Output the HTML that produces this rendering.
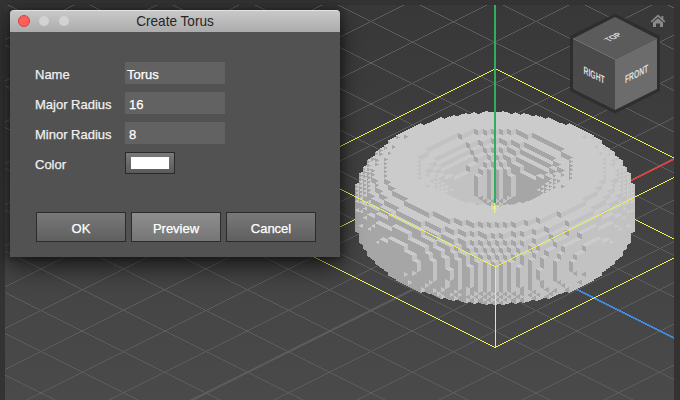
<!DOCTYPE html>
<html><head><meta charset="utf-8"><style>
html,body{margin:0;padding:0;width:680px;height:400px;overflow:hidden;background:#333;}
body{position:relative;font-family:"Liberation Sans",sans-serif;}
svg{position:absolute;left:0;top:0;}
.dlg{position:absolute;left:10px;top:10px;width:330px;height:247px;background:#525252;border-radius:4px 4px 0 0;box-shadow:0 0 6px 3px rgba(0,0,0,0.28),0 10px 24px rgba(0,0,0,0.6);}
.tb{position:absolute;left:0;top:0;width:330px;height:22px;background:linear-gradient(#c8c8c8,#acacac);border-top:1px solid #e2e2e2;box-sizing:border-box;border-radius:4px 4px 0 0;}
.tt{position:absolute;left:0;width:330px;top:2px;text-align:center;font-size:14.1px;color:#262626;line-height:16px;transform:scaleX(0.965);}
.dot{position:absolute;top:4px;width:12px;height:12px;border-radius:50%;box-sizing:border-box;}
.lbl{position:absolute;left:25px;font-size:13px;color:#f0f0f0;line-height:16px;-webkit-text-stroke:0.25px #f0f0f0;}
.fld{position:absolute;left:115px;width:100px;height:22px;background:#626262;}
.fld span{position:absolute;left:2px;top:4.5px;-webkit-text-stroke:0.25px #fff;font-size:13px;color:#fff;line-height:16px;}
.btn{position:absolute;top:202px;width:90px;height:30px;box-sizing:border-box;border:1px solid #2c2c2c;background:linear-gradient(#797979,#5f5f5f);color:#fff;font-size:13px;text-align:center;line-height:31px;-webkit-text-stroke:0.25px #fff;}
</style></head><body>
<svg width="680" height="400" viewBox="0 0 680 400">
<defs>
<linearGradient id="bg" x1="0" y1="0" x2="0" y2="1">
<stop offset="0" stop-color="#383838"/><stop offset="1" stop-color="#4a4a4a"/>
</linearGradient>
<clipPath id="vp"><rect x="5" y="5" width="669" height="395"/></clipPath>
</defs>
<rect x="0" y="0" width="680" height="400" fill="#333"/>
<rect x="5" y="5" width="669" height="395" fill="url(#bg)"/>
<g clip-path="url(#vp)">
<path d="M0.00 -535.10L680.00 -195.10M0.00 -493.85L680.00 -153.85M0.00 -452.60L680.00 -112.60M0.00 -411.35L680.00 -71.35M0.00 -370.10L680.00 -30.10M0.00 -328.85L680.00 11.15M0.00 -287.60L680.00 52.40M0.00 -246.35L680.00 93.65M0.00 -205.10L680.00 134.90M0.00 -163.85L680.00 176.15M0.00 -122.60L680.00 217.40M0.00 -81.35L680.00 258.65M0.00 -40.10L680.00 299.90M0.00 1.15L680.00 341.15M0.00 42.40L680.00 382.40M0.00 83.65L680.00 423.65M0.00 124.90L680.00 464.90M0.00 166.15L680.00 506.15M0.00 207.40L680.00 547.40M0.00 248.65L680.00 588.65M0.00 289.90L680.00 629.90M0.00 331.15L680.00 671.15M0.00 372.40L680.00 712.40M0.00 413.65L680.00 753.65M0.00 454.90L680.00 794.90M0.00 496.15L680.00 836.15M0.00 537.40L680.00 877.40M0.00 578.65L680.00 918.65M0.00 619.90L680.00 959.90M0.00 661.15L680.00 1001.15M0.00 702.40L680.00 1042.40M0.00 743.65L680.00 1083.65M0.00 784.90L680.00 1124.90M0.00 826.15L680.00 1166.15M0.00 867.40L680.00 1207.40M0.00 908.65L680.00 1248.65M0.00 949.90L680.00 1289.90M0.00 991.15L680.00 1331.15M0.00 1032.40L680.00 1372.40M0.00 1073.65L680.00 1413.65M0.00 -494.10L680.00 -834.10M0.00 -452.85L680.00 -792.85M0.00 -411.60L680.00 -751.60M0.00 -370.35L680.00 -710.35M0.00 -329.10L680.00 -669.10M0.00 -287.85L680.00 -627.85M0.00 -246.60L680.00 -586.60M0.00 -205.35L680.00 -545.35M0.00 -164.10L680.00 -504.10M0.00 -122.85L680.00 -462.85M0.00 -81.60L680.00 -421.60M0.00 -40.35L680.00 -380.35M0.00 0.90L680.00 -339.10M0.00 42.15L680.00 -297.85M0.00 83.40L680.00 -256.60M0.00 124.65L680.00 -215.35M0.00 165.90L680.00 -174.10M0.00 207.15L680.00 -132.85M0.00 248.40L680.00 -91.60M0.00 289.65L680.00 -50.35M0.00 330.90L680.00 -9.10M0.00 372.15L680.00 32.15M0.00 413.40L680.00 73.40M0.00 454.65L680.00 114.65M0.00 495.90L680.00 155.90M0.00 537.15L680.00 197.15M0.00 578.40L680.00 238.40M0.00 619.65L680.00 279.65M0.00 660.90L680.00 320.90M0.00 702.15L680.00 362.15M0.00 743.40L680.00 403.40M0.00 784.65L680.00 444.65M0.00 825.90L680.00 485.90M0.00 867.15L680.00 527.15M0.00 908.40L680.00 568.40M0.00 949.65L680.00 609.65M0.00 990.90L680.00 650.90M0.00 1032.15L680.00 692.15M0.00 1073.40L680.00 733.40M0.00 1114.65L680.00 774.65" stroke="#5c5c5c" stroke-width="1" fill="none" shape-rendering="crispEdges"/>
<path d="M0 496L680 156" stroke="#5e5e5e" stroke-width="2" fill="none"/>
<path d="M494.9 248.5L680 155.95" stroke="#dc4444" stroke-width="1.7" fill="none" shape-rendering="crispEdges"/>
<path d="M494.9 248.5L680 341.05" stroke="#4288e0" stroke-width="1.7" fill="none" shape-rendering="crispEdges"/>
<g stroke="#f0f052" stroke-width="1" fill="none" shape-rendering="crispEdges">
<path d="M297.30 167.80L495.30 68.80L693.30 167.80"/>
<path d="M297.30 248.50L495.30 347.50L693.30 248.50"/>
<path d="M297.30 248.50L495.30 149.50L693.30 248.50"/>
</g>
<g shape-rendering="crispEdges">
<path d="M502 111h2v1h-2zM485 111h3v1h-3zM494 111h2v1h-2zM515 112h1v1h-1zM473 112h2v1h-2zM482 112h26v1h-26zM523 113h2v1h-2zM465 113h2v1h-2zM480 113h30v1h-30zM471 113h6v1h-6zM513 113h5v1h-5zM461 114h59v1h-59zM521 114h8v1h-8zM459 115h72v1h-72zM453 115h2v1h-2zM535 115h2v1h-2zM449 116h1v1h-1zM540 116h1v1h-1zM451 116h88v1h-88zM447 117h96v1h-96zM440 117h2v1h-2zM548 117h1v1h-1zM438 118h6v1h-6zM445 118h100v1h-100zM546 118h5v1h-5zM436 119h117v1h-117zM434 120h121v1h-121zM432 121h125v1h-125zM430 122h129v1h-129zM427 123h136v1h-136zM420 123h1v1h-1zM569 123h1v1h-1zM418 124h5v1h-5zM567 124h5v1h-5zM425 124h140v1h-140zM416 125h158v1h-158zM414 126h162v1h-162zM412 127h166v1h-166zM410 128h170v1h-170zM408 129h174v1h-174zM406 130h178v1h-178zM404 131h182v1h-182zM402 132h186v1h-186zM400 133h190v1h-190zM398 134h194v1h-194zM396 135h198v2h-198zM394 137h202v1h-202zM392 138h206v1h-206zM390 139h210v1h-210zM388 140h214v4h-214zM386 144h217v1h-217zM384 145h221v1h-221zM384 146h222v1h-222zM382 147h226v1h-226zM380 148h230v1h-230zM379 149h231v1h-231zM378 150h234v1h-234zM376 151h238v1h-238zM375 152h240v4h-240zM373 156h244v1h-244zM371 157h248v1h-248zM370 158h249v1h-249zM368 159h253v1h-253zM367 160h256v5h-256zM366 165h257v1h-257zM364 166h261v1h-261zM363 167h264v5h-264zM361 172h268v1h-268zM359 173h272v10h-272zM357 183h276v1h-276zM355 184h280v48h-280zM357 232h276v1h-276zM359 233h272v10h-272zM360 243h270v1h-270zM362 244h266v1h-266zM363 245h264v4h-264zM364 249h262v1h-262zM366 250h258v1h-258zM367 251h256v5h-256zM368 256h254v1h-254zM370 257h250v1h-250zM371 258h248v1h-248zM372 259h246v1h-246zM374 260h242v1h-242zM375 261h240v3h-240zM376 264h238v1h-238zM378 265h234v1h-234zM379 266h231v1h-231zM380 267h230v1h-230zM382 268h226v1h-226zM384 269h222v2h-222zM386 271h218v1h-218zM388 272h214v4h-214zM390 276h210v1h-210zM392 277h206v1h-206zM394 278h202v1h-202zM396 279h198v2h-198zM398 281h194v1h-194zM400 282h190v1h-190zM402 283h186v1h-186zM404 284h182v1h-182zM406 285h178v1h-178zM408 286h174v1h-174zM410 287h170v1h-170zM412 288h166v1h-166zM414 289h162v1h-162zM416 290h158v1h-158zM418 291h154v1h-154zM426 292h138v1h-138zM568 292h2v1h-2zM420 292h2v1h-2zM428 293h134v1h-134zM432 294h126v1h-126zM434 295h122v1h-122zM436 296h118v1h-118zM438 297h114v1h-114zM547 298h3v1h-3zM440 298h3v1h-3zM446 298h97v1h-97zM448 299h93v1h-93zM452 300h3v1h-3zM459 300h72v1h-72zM535 300h3v1h-3zM461 301h68v1h-68zM522 302h3v1h-3zM464 302h4v1h-4zM479 302h32v1h-32zM471 302h7v1h-7zM512 302h7v1h-7zM514 303h3v1h-3zM481 303h28v1h-28zM473 303h3v1h-3zM501 304h4v1h-4zM485 304h3v1h-3zM493 304h4v1h-4z" fill="#cbcbcb"/>
<path d="M507 129h2v1h-2zM491 129h2v1h-2zM474 129h2v1h-2zM499 129h2v1h-2zM516 129h1v1h-1zM483 129h1v1h-1zM483 130h3v1h-3zM516 130h3v1h-3zM516 131h5v1h-5zM516 132h7v1h-7zM516 133h9v1h-9zM483 131h4v3h-4zM532 133h2v1h-2zM491 130h4v4h-4zM499 130h4v4h-4zM507 130h4v4h-4zM458 133h1v1h-1zM474 130h4v4h-4zM458 134h3v1h-3zM493 134h2v1h-2zM509 134h2v1h-2zM517 134h10v1h-10zM532 134h4v1h-4zM476 134h2v1h-2zM484 134h3v1h-3zM501 134h2v1h-2zM486 135h1v1h-1zM519 135h9v1h-9zM404 135h2v1h-2zM532 135h6v1h-6zM532 136h8v1h-8zM404 136h4v1h-4zM396 136h2v1h-2zM521 136h7v1h-7zM523 137h5v1h-5zM404 137h3v1h-3zM532 137h10v1h-10zM458 135h4v3h-4zM396 137h4v1h-4zM404 138h1v1h-1zM534 138h10v1h-10zM499 138h2v1h-2zM459 138h3v1h-3zM491 138h1v1h-1zM396 138h2v1h-2zM525 138h3v1h-3zM527 139h1v1h-1zM461 139h1v1h-1zM499 139h4v1h-4zM536 139h10v1h-10zM491 139h3v1h-3zM478 140h2v1h-2zM499 140h6v1h-6zM511 140h2v1h-2zM538 140h10v1h-10zM511 141h4v1h-4zM388 141h1v1h-1zM540 141h10v1h-10zM478 141h4v1h-4zM524 142h1v1h-1zM491 140h4v3h-4zM499 141h8v2h-8zM511 142h6v1h-6zM542 142h10v1h-10zM388 142h2v1h-2zM466 142h1v1h-1zM492 143h3v1h-3zM466 143h3v1h-3zM524 143h3v1h-3zM501 143h6v1h-6zM511 143h8v1h-8zM544 143h10v1h-10zM478 142h5v3h-5zM494 144h1v1h-1zM546 144h10v1h-10zM511 144h9v1h-9zM503 144h4v1h-4zM524 144h5v1h-5zM392 145h1v1h-1zM524 145h7v1h-7zM513 145h7v1h-7zM505 145h2v1h-2zM480 145h3v1h-3zM548 145h10v1h-10zM466 144h4v3h-4zM550 146h10v1h-10zM482 146h1v1h-1zM384 146h1v1h-1zM524 146h9v1h-9zM515 146h5v1h-5zM507 147h2v1h-2zM467 147h3v1h-3zM491 147h1v1h-1zM392 146h3v2h-3zM499 147h1v1h-1zM517 147h3v1h-3zM483 147h1v1h-1zM525 147h10v1h-10zM552 147h10v1h-10zM483 148h3v1h-3zM392 148h1v1h-1zM469 148h1v1h-1zM507 148h4v1h-4zM527 148h10v1h-10zM384 147h3v2h-3zM519 148h1v1h-1zM491 148h3v1h-3zM554 148h10v1h-10zM499 148h3v1h-3zM520 149h1v1h-1zM507 149h6v1h-6zM384 149h1v1h-1zM556 149h8v1h-8zM379 149h2v1h-2zM529 149h10v1h-10zM470 149h1v1h-1zM379 150h4v1h-4zM507 150h8v1h-8zM558 150h4v1h-4zM470 150h3v1h-3zM520 150h3v1h-3zM531 150h10v1h-10zM491 149h4v3h-4zM533 151h10v1h-10zM560 151h1v1h-1zM499 149h4v3h-4zM379 151h2v1h-2zM483 149h4v3h-4zM507 151h9v1h-9zM520 151h5v1h-5zM379 152h1v1h-1zM508 152h8v1h-8zM561 152h2v1h-2zM492 152h3v1h-3zM520 152h7v1h-7zM375 152h1v1h-1zM535 152h10v1h-10zM388 152h2v1h-2zM500 152h3v1h-3zM484 152h3v1h-3zM502 153h1v1h-1zM470 151h4v3h-4zM486 153h1v1h-1zM494 153h1v1h-1zM379 153h3v1h-3zM388 153h3v1h-3zM520 153h9v1h-9zM561 153h4v1h-4zM375 153h3v1h-3zM510 153h6v1h-6zM537 153h10v1h-10zM521 154h10v1h-10zM495 154h1v1h-1zM561 154h6v1h-6zM379 154h4v1h-4zM388 154h1v1h-1zM487 154h1v1h-1zM375 154h2v1h-2zM539 154h10v1h-10zM471 154h3v1h-3zM503 154h1v1h-1zM512 154h4v1h-4zM541 155h10v1h-10zM503 155h3v1h-3zM561 155h8v1h-8zM495 155h3v1h-3zM523 155h10v1h-10zM514 155h2v1h-2zM379 155h2v1h-2zM473 155h1v1h-1zM487 155h3v1h-3zM543 156h10v1h-10zM503 156h5v1h-5zM525 156h10v1h-10zM474 156h1v1h-1zM561 156h10v1h-10zM474 157h3v1h-3zM516 157h2v1h-2zM371 157h1v1h-1zM563 157h10v1h-10zM527 157h10v1h-10zM545 157h10v1h-10zM503 157h7v1h-7zM495 156h4v3h-4zM384 158h2v1h-2zM547 158h9v1h-9zM487 156h4v3h-4zM375 158h1v1h-1zM503 158h8v1h-8zM516 158h4v1h-4zM565 158h6v1h-6zM371 158h3v1h-3zM529 158h10v1h-10zM496 159h3v1h-3zM504 159h7v1h-7zM371 159h7v1h-7zM488 159h3v1h-3zM567 159h2v1h-2zM384 159h4v1h-4zM531 159h10v1h-10zM549 159h5v1h-5zM516 159h6v1h-6zM551 160h2v1h-2zM384 160h2v1h-2zM516 160h8v1h-8zM533 160h10v1h-10zM498 160h1v1h-1zM506 160h5v1h-5zM375 160h4v1h-4zM490 160h1v1h-1zM474 158h4v3h-4zM367 160h1v1h-1zM569 160h2v1h-2zM371 160h2v1h-2zM553 161h2v1h-2zM367 161h3v1h-3zM375 161h2v1h-2zM569 161h4v1h-4zM475 161h3v1h-3zM535 161h10v1h-10zM491 161h1v1h-1zM516 161h10v1h-10zM499 161h1v1h-1zM477 162h1v1h-1zM553 162h4v1h-4zM367 162h2v1h-2zM384 162h1v1h-1zM483 162h2v1h-2zM537 162h10v1h-10zM507 161h4v2h-4zM491 162h3v1h-3zM518 162h10v1h-10zM569 162h2v1h-2zM499 162h3v1h-3zM507 163h5v1h-5zM375 163h2v1h-2zM539 163h10v1h-10zM520 163h10v1h-10zM553 163h6v1h-6zM384 163h3v1h-3zM541 164h10v1h-10zM553 164h8v1h-8zM384 164h2v1h-2zM367 164h2v1h-2zM507 164h7v1h-7zM375 164h4v1h-4zM522 164h10v1h-10zM569 164h2v1h-2zM375 165h2v1h-2zM569 165h4v1h-4zM543 165h16v1h-16zM524 165h10v1h-10zM499 163h4v3h-4zM367 165h4v1h-4zM507 165h9v1h-9zM466 165h1v1h-1zM555 166h2v1h-2zM545 166h6v1h-6zM367 166h2v1h-2zM466 166h3v1h-3zM384 166h1v1h-1zM491 163h4v4h-4zM508 166h10v1h-10zM569 166h3v1h-3zM524 166h12v1h-12zM483 163h4v4h-4zM500 166h3v1h-3zM502 167h1v1h-1zM524 167h14v1h-14zM493 167h2v1h-2zM569 167h1v1h-1zM547 167h2v1h-2zM485 167h2v1h-2zM510 167h10v1h-10zM557 167h2v1h-2zM384 167h3v1h-3zM384 168h2v1h-2zM478 168h1v1h-1zM367 168h2v1h-2zM524 168h16v1h-16zM503 168h1v1h-1zM557 168h4v1h-4zM569 168h2v1h-2zM549 168h2v1h-2zM487 169h2v1h-2zM367 169h6v1h-6zM503 169h3v1h-3zM557 169h6v1h-6zM569 169h4v1h-4zM549 169h4v1h-4zM478 169h3v1h-3zM524 169h18v1h-18zM363 168h2v2h-2zM495 169h2v1h-2zM466 167h4v4h-4zM524 170h20v1h-20zM367 170h2v1h-2zM384 170h1v1h-1zM569 170h3v1h-3zM371 170h4v1h-4zM549 170h6v1h-6zM557 170h8v1h-8zM549 171h14v1h-14zM526 171h20v1h-20zM468 171h2v1h-2zM371 171h3v1h-3zM384 171h3v1h-3zM363 171h2v1h-2zM478 170h5v3h-5zM384 172h2v1h-2zM569 171h1v2h-1zM371 172h1v1h-1zM363 172h6v1h-6zM511 168h9v5h-9zM559 172h2v1h-2zM549 172h6v1h-6zM528 172h20v1h-20zM479 173h4v1h-4zM512 173h10v1h-10zM367 173h6v1h-6zM550 173h3v1h-3zM561 173h1v1h-1zM530 173h17v1h-17zM363 173h2v1h-2zM514 174h10v1h-10zM552 174h2v1h-2zM481 174h2v1h-2zM367 174h3v1h-3zM384 174h1v1h-1zM569 173h3v2h-3zM371 174h4v1h-4zM542 174h3v1h-3zM503 170h4v5h-4zM359 174h2v1h-2zM532 174h6v1h-6zM359 175h6v1h-6zM544 175h2v1h-2zM503 175h5v1h-5zM516 175h10v1h-10zM553 175h3v1h-3zM474 175h1v1h-1zM534 175h2v1h-2zM371 175h3v1h-3zM367 175h1v1h-1zM561 174h3v2h-3zM553 176h2v1h-2zM474 176h3v1h-3zM569 175h1v2h-1zM536 176h2v1h-2zM371 176h1v1h-1zM363 176h6v1h-6zM561 176h1v1h-1zM384 175h3v2h-3zM359 176h2v1h-2zM544 176h4v1h-4zM503 176h7v1h-7zM516 176h12v1h-12zM544 177h6v1h-6zM384 177h1v1h-1zM516 177h14v1h-14zM367 177h5v1h-5zM536 177h4v1h-4zM363 177h2v1h-2zM367 178h3v1h-3zM553 178h1v1h-1zM569 177h3v2h-3zM544 178h8v1h-8zM359 178h2v1h-2zM371 178h3v1h-3zM516 178h16v1h-16zM536 178h6v1h-6zM536 179h15v1h-15zM371 179h5v1h-5zM569 179h1v1h-1zM384 179h2v1h-2zM516 179h18v1h-18zM359 179h5v1h-5zM557 179h1v1h-1zM384 180h4v1h-4zM516 180h33v1h-33zM553 179h3v2h-3zM359 180h2v1h-2zM367 179h1v2h-1zM516 181h34v1h-34zM557 180h3v2h-3zM363 180h3v2h-3zM371 180h7v2h-7zM384 181h6v1h-6zM359 182h1v1h-1zM516 182h31v1h-31zM367 181h3v2h-3zM372 182h4v1h-4zM553 181h1v2h-1zM549 182h3v1h-3zM384 182h7v1h-7zM557 182h1v1h-1zM363 182h1v2h-1zM384 183h5v1h-5zM359 183h3v1h-3zM374 183h2v1h-2zM553 183h3v1h-3zM516 183h29v1h-29zM549 183h2v1h-2zM553 184h1v1h-1zM516 184h30v1h-30zM386 184h2v1h-2zM375 184h3v1h-3zM359 184h2v1h-2zM367 183h1v2h-1zM561 185h2v1h-2zM549 185h1v1h-1zM516 185h27v1h-27zM363 184h3v2h-3zM355 185h1v1h-1zM375 185h4v1h-4zM388 185h2v1h-2zM544 185h4v1h-4zM516 186h25v1h-25zM359 186h1v1h-1zM544 186h3v1h-3zM388 186h4v1h-4zM553 186h2v1h-2zM367 185h3v2h-3zM375 186h2v1h-2zM549 186h3v1h-3zM561 186h4v1h-4zM355 186h3v1h-3zM355 187h2v1h-2zM363 186h1v2h-1zM561 187h2v1h-2zM549 187h1v1h-1zM375 187h1v1h-1zM516 187h26v1h-26zM553 187h3v1h-3zM388 187h6v1h-6zM544 187h1v1h-1zM388 188h8v1h-8zM553 188h1v1h-1zM359 187h3v2h-3zM516 188h23v1h-23zM540 188h6v1h-6zM375 188h3v1h-3zM367 187h1v2h-1zM375 189h5v1h-5zM367 189h3v1h-3zM516 189h21v1h-21zM363 188h3v2h-3zM355 189h1v1h-1zM540 189h3v1h-3zM388 189h6v1h-6zM544 189h4v1h-4zM549 189h2v1h-2zM359 189h1v2h-1zM540 190h1v1h-1zM549 190h1v1h-1zM390 190h2v1h-2zM375 190h7v1h-7zM544 190h2v1h-2zM367 190h4v1h-4zM516 190h22v1h-22zM516 191h25v1h-25zM363 190h1v2h-1zM392 191h2v1h-2zM375 191h8v1h-8zM367 191h2v1h-2zM544 191h1v1h-1zM355 190h3v2h-3zM392 192h4v1h-4zM359 191h3v2h-3zM376 192h5v1h-5zM544 192h2v1h-2zM367 192h1v1h-1zM367 193h3v1h-3zM516 192h27v2h-27zM363 192h3v2h-3zM355 192h1v2h-1zM392 193h6v1h-6zM378 193h2v1h-2zM516 194h25v1h-25zM359 193h1v2h-1zM363 194h1v1h-1zM392 194h8v1h-8zM367 194h5v1h-5zM379 194h3v1h-3zM516 195h24v1h-24zM392 195h10v1h-10zM503 177h8v19h-8zM474 177h4v19h-4zM355 194h3v2h-3zM367 195h7v1h-7zM379 195h5v1h-5zM481 196h2v1h-2zM379 196h7v1h-7zM509 196h2v1h-2zM359 195h3v2h-3zM355 196h1v1h-1zM476 196h2v1h-2zM367 196h8v1h-8zM514 196h24v1h-24zM363 196h2v1h-2zM394 196h10v1h-10zM359 197h1v1h-1zM479 197h4v1h-4zM363 197h10v1h-10zM379 197h9v1h-9zM512 197h24v1h-24zM396 197h10v1h-10zM355 198h2v1h-2zM478 198h5v1h-5zM495 170h4v29h-4zM511 198h23v1h-23zM380 198h6v1h-6zM487 170h4v29h-4zM398 198h10v1h-10zM503 196h4v3h-4zM363 198h8v1h-8zM493 199h2v1h-2zM382 199h2v1h-2zM363 199h10v1h-10zM505 199h2v1h-2zM485 199h2v1h-2zM489 199h2v1h-2zM359 199h2v1h-2zM400 199h7v1h-7zM509 199h23v1h-23zM355 199h3v1h-3zM480 199h3v1h-3zM497 199h2v1h-2zM501 199h2v1h-2zM482 200h5v1h-5zM359 200h3v1h-3zM384 200h1v1h-1zM355 200h1v1h-1zM402 200h3v1h-3zM363 200h6v1h-6zM371 200h4v1h-4zM507 200h23v1h-23zM359 201h1v1h-1zM365 201h2v1h-2zM507 201h19v1h-19zM491 200h4v2h-4zM404 201h2v1h-2zM499 200h4v2h-4zM384 201h3v1h-3zM483 201h4v1h-4zM371 201h6v1h-6zM355 202h2v1h-2zM493 202h2v1h-2zM371 202h8v1h-8zM505 202h13v1h-13zM404 202h4v1h-4zM521 202h3v1h-3zM384 202h5v1h-5zM367 202h2v1h-2zM489 202h2v1h-2zM497 202h2v1h-2zM484 202h3v1h-3zM501 202h2v1h-2zM503 203h13v1h-13zM404 203h6v1h-6zM384 203h7v1h-7zM367 203h14v1h-14zM486 203h5v1h-5zM355 203h6v1h-6zM384 204h9v1h-9zM513 204h1v1h-1zM495 203h4v2h-4zM503 204h3v1h-3zM355 204h8v1h-8zM509 204h2v1h-2zM487 204h4v1h-4zM367 204h2v1h-2zM373 204h10v1h-10zM477 204h1v1h-1zM404 204h8v1h-8zM501 205h1v1h-1zM404 205h10v1h-10zM385 205h10v1h-10zM375 205h7v1h-7zM489 205h2v1h-2zM493 205h1v1h-1zM355 205h10v1h-10zM497 205h2v1h-2zM377 206h3v1h-3zM355 206h14v1h-14zM406 206h10v1h-10zM491 206h1v1h-1zM499 206h1v1h-1zM387 206h10v1h-10zM389 207h10v1h-10zM408 207h10v1h-10zM355 207h10v1h-10zM367 207h4v1h-4zM379 207h2v1h-2zM367 208h6v1h-6zM379 208h4v1h-4zM359 208h4v1h-4zM391 208h8v1h-8zM355 208h3v1h-3zM410 208h10v1h-10zM412 209h10v1h-10zM379 209h6v1h-6zM359 209h6v1h-6zM355 209h1v1h-1zM393 209h4v1h-4zM367 209h8v1h-8zM363 210h14v1h-14zM414 210h10v1h-10zM359 210h2v1h-2zM395 210h2v1h-2zM379 210h8v1h-8zM355 211h2v1h-2zM433 211h1v1h-1zM396 211h3v1h-3zM363 211h26v1h-26zM416 211h10v1h-10zM557 211h1v1h-1zM418 212h10v1h-10zM557 212h3v1h-3zM396 212h5v1h-5zM363 212h15v1h-15zM433 212h3v1h-3zM381 212h10v1h-10zM355 212h6v1h-6zM433 213h5v1h-5zM396 213h7v1h-7zM355 213h14v1h-14zM383 213h8v1h-8zM373 213h3v1h-3zM420 213h9v1h-9zM375 214h2v1h-2zM433 214h7v1h-7zM385 214h4v1h-4zM396 214h9v1h-9zM422 214h7v1h-7zM355 214h12v1h-12zM355 215h14v1h-14zM397 215h10v1h-10zM387 215h2v1h-2zM375 215h4v1h-4zM433 215h9v1h-9zM424 215h5v1h-5zM557 213h4v3h-4zM434 216h10v1h-10zM426 216h3v1h-3zM399 216h10v1h-10zM558 216h3v1h-3zM388 216h3v1h-3zM355 216h10v1h-10zM367 216h4v1h-4zM375 216h6v1h-6zM367 217h6v1h-6zM375 217h8v1h-8zM355 217h8v1h-8zM428 217h1v1h-1zM401 217h10v1h-10zM536 217h1v1h-1zM436 217h10v1h-10zM560 217h1v1h-1zM388 217h5v1h-5zM388 218h7v1h-7zM454 218h2v1h-2zM367 218h18v1h-18zM355 218h9v1h-9zM403 218h10v1h-10zM438 218h10v1h-10zM536 218h3v1h-3zM405 219h10v1h-10zM355 219h11v1h-11zM440 219h10v1h-10zM388 219h9v1h-9zM454 219h4v1h-4zM367 219h20v1h-20zM355 220h44v1h-44zM442 220h8v1h-8zM565 220h1v1h-1zM466 220h2v1h-2zM407 220h10v1h-10zM524 220h2v1h-2zM454 220h6v1h-6zM466 221h4v1h-4zM511 221h1v1h-1zM478 221h1v1h-1zM355 221h23v1h-23zM565 221h3v1h-3zM425 221h2v1h-2zM381 221h20v1h-20zM444 221h6v1h-6zM536 219h4v3h-4zM409 221h10v1h-10zM487 222h2v1h-2zM537 222h3v1h-3zM466 222h6v1h-6zM511 222h3v1h-3zM503 222h2v1h-2zM446 222h4v1h-4zM454 221h8v2h-8zM478 222h3v1h-3zM411 222h10v1h-10zM495 222h2v1h-2zM383 222h20v1h-20zM425 222h4v1h-4zM355 222h21v2h-21zM385 223h20v1h-20zM448 223h2v1h-2zM413 223h8v1h-8zM425 223h6v1h-6zM539 223h1v1h-1zM456 223h6v1h-6zM363 224h11v1h-11zM524 221h4v4h-4zM565 222h4v3h-4zM397 224h10v1h-10zM415 224h6v1h-6zM387 224h8v1h-8zM458 224h4v1h-4zM466 223h8v2h-8zM375 224h3v1h-3zM425 224h8v1h-8zM355 224h6v1h-6zM389 225h4v1h-4zM375 225h5v1h-5zM425 225h10v1h-10zM478 223h5v3h-5zM417 225h4v1h-4zM399 225h10v1h-10zM355 225h4v1h-4zM566 225h3v1h-3zM460 225h2v1h-2zM468 225h6v1h-6zM511 223h5v3h-5zM526 225h2v1h-2zM470 226h4v1h-4zM479 226h4v1h-4zM568 226h1v1h-1zM355 226h5v1h-5zM495 223h4v4h-4zM391 226h1v1h-1zM401 226h10v1h-10zM487 223h4v4h-4zM375 226h7v1h-7zM419 226h2v1h-2zM445 226h1v1h-1zM512 226h4v1h-4zM363 225h9v2h-9zM427 226h10v1h-10zM544 226h1v1h-1zM503 223h4v4h-4zM375 227h9v1h-9zM544 227h3v1h-3zM472 227h2v1h-2zM481 227h2v1h-2zM514 227h2v1h-2zM363 227h7v1h-7zM497 227h2v1h-2zM355 227h7v1h-7zM505 227h2v1h-2zM489 227h2v1h-2zM429 227h10v1h-10zM371 227h3v1h-3zM392 227h2v1h-2zM445 227h3v1h-3zM403 227h10v1h-10zM371 228h15v1h-15zM392 228h4v1h-4zM405 228h10v1h-10zM431 228h10v1h-10zM445 228h5v1h-5zM445 229h7v1h-7zM532 229h2v1h-2zM458 229h2v1h-2zM371 229h17v1h-17zM407 229h10v1h-10zM392 229h6v1h-6zM355 228h13v2h-13zM433 229h8v1h-8zM392 230h8v1h-8zM355 230h15v1h-15zM435 230h6v1h-6zM445 230h9v1h-9zM544 228h5v3h-5zM425 230h2v1h-2zM458 230h4v1h-4zM371 230h19v1h-19zM409 230h10v1h-10zM565 230h2v1h-2zM355 231h47v1h-47zM478 231h2v1h-2zM446 231h8v1h-8zM458 231h6v1h-6zM437 231h4v1h-4zM545 231h4v1h-4zM470 231h2v1h-2zM411 231h10v1h-10zM511 231h2v1h-2zM425 231h4v1h-4zM520 231h2v1h-2zM439 232h2v1h-2zM511 232h4v1h-4zM448 232h6v1h-6zM478 232h4v1h-4zM425 232h6v1h-6zM357 232h47v1h-47zM547 232h2v1h-2zM577 232h1v1h-1zM450 233h4v1h-4zM491 233h2v1h-2zM499 233h2v1h-2zM532 230h4v4h-4zM458 232h8v2h-8zM478 233h6v1h-6zM359 233h47v1h-47zM577 233h3v1h-3zM425 233h8v1h-8zM478 234h8v1h-8zM425 234h10v1h-10zM452 234h2v1h-2zM565 231h4v4h-4zM460 234h6v1h-6zM441 234h2v1h-2zM534 234h2v1h-2zM549 234h2v1h-2zM470 232h4v4h-4zM441 235h4v1h-4zM520 232h4v4h-4zM359 234h49v2h-49zM462 235h4v1h-4zM567 235h2v1h-2zM427 235h10v1h-10zM511 233h5v3h-5zM478 235h9v1h-9zM464 236h2v1h-2zM577 234h5v3h-5zM522 236h2v1h-2zM412 232h9v5h-9zM429 236h8v1h-8zM441 236h6v1h-6zM359 236h32v1h-32zM392 236h16v1h-16zM480 236h7v1h-7zM513 236h3v1h-3zM472 236h2v1h-2zM515 237h1v1h-1zM482 237h5v1h-5zM578 237h4v1h-4zM384 237h5v1h-5zM491 234h4v4h-4zM431 237h6v1h-6zM499 234h4v4h-4zM394 237h14v1h-14zM441 237h8v1h-8zM413 237h10v1h-10zM359 237h24v1h-24zM580 238h2v1h-2zM441 238h10v1h-10zM493 238h2v1h-2zM532 238h2v1h-2zM433 238h4v1h-4zM415 238h10v1h-10zM396 238h12v1h-12zM458 238h2v1h-2zM549 235h4v4h-4zM359 238h22v1h-22zM386 238h2v1h-2zM484 238h3v1h-3zM501 238h2v1h-2zM486 239h1v1h-1zM443 239h10v1h-10zM417 239h10v1h-10zM435 239h2v1h-2zM550 239h3v1h-3zM398 239h10v1h-10zM458 239h4v1h-4zM388 239h2v1h-2zM359 239h21v1h-21zM520 240h1v1h-1zM478 240h2v1h-2zM445 240h9v1h-9zM388 240h4v1h-4zM458 240h6v1h-6zM359 240h23v1h-23zM487 240h1v1h-1zM503 240h2v1h-2zM552 240h1v1h-1zM470 240h2v1h-2zM400 240h10v1h-10zM511 240h2v1h-2zM419 240h10v1h-10zM495 240h2v1h-2zM421 241h10v1h-10zM511 241h4v1h-4zM553 241h1v1h-1zM402 241h10v1h-10zM478 241h4v1h-4zM487 241h3v1h-3zM520 241h3v1h-3zM388 241h6v1h-6zM359 241h18v1h-18zM447 241h7v1h-7zM379 241h5v1h-5zM437 241h2v1h-2zM359 242h17v1h-17zM388 242h8v1h-8zM379 242h7v1h-7zM437 242h4v1h-4zM404 242h10v1h-10zM532 239h4v4h-4zM458 241h8v2h-8zM553 242h3v1h-3zM423 242h10v1h-10zM449 242h5v1h-5zM451 243h3v1h-3zM459 243h7v1h-7zM406 243h10v1h-10zM379 243h19v1h-19zM437 243h6v1h-6zM534 243h2v1h-2zM425 243h8v1h-8zM360 243h18v1h-18zM470 241h4v4h-4zM520 242h4v3h-4zM478 242h5v3h-5zM437 244h8v1h-8zM495 241h4v4h-4zM453 244h1v1h-1zM408 244h10v1h-10zM461 244h5v1h-5zM487 242h4v3h-4zM511 242h5v3h-5zM503 241h4v4h-4zM362 244h38v1h-38zM427 244h6v1h-6zM472 245h2v1h-2zM536 245h2v1h-2zM521 245h3v1h-3zM363 245h39v1h-39zM496 245h3v1h-3zM553 243h4v3h-4zM488 245h3v1h-3zM505 245h2v1h-2zM437 245h10v1h-10zM513 245h3v1h-3zM408 245h12v1h-12zM454 245h1v1h-1zM528 245h1v1h-1zM480 245h3v1h-3zM582 245h1v1h-1zM408 246h14v1h-14zM454 246h3v1h-3zM515 246h1v1h-1zM561 246h2v1h-2zM528 246h3v1h-3zM482 246h1v1h-1zM582 246h3v1h-3zM523 246h1v1h-1zM462 245h4v2h-4zM498 246h1v1h-1zM439 246h10v1h-10zM490 246h1v1h-1zM554 246h3v1h-3zM462 247h5v1h-5zM507 247h2v1h-2zM474 247h2v1h-2zM516 247h1v1h-1zM491 247h1v1h-1zM441 247h9v1h-9zM408 247h16v1h-16zM429 245h4v3h-4zM483 247h1v1h-1zM499 247h1v1h-1zM556 247h1v1h-1zM429 248h6v1h-6zM483 248h3v1h-3zM443 248h7v1h-7zM462 248h7v1h-7zM363 246h41v3h-41zM516 248h3v1h-3zM491 248h3v1h-3zM499 248h3v1h-3zM582 247h4v3h-4zM462 249h8v1h-8zM408 248h17v2h-17zM429 249h8v1h-8zM536 246h4v4h-4zM454 247h4v3h-4zM364 249h40v1h-40zM528 247h4v3h-4zM529 250h3v1h-3zM583 250h3v1h-3zM463 250h7v1h-7zM538 250h2v1h-2zM410 250h15v1h-15zM429 250h10v1h-10zM544 250h2v1h-2zM561 247h4v4h-4zM455 250h3v1h-3zM366 250h38v1h-38zM544 251h4v1h-4zM412 251h13v1h-13zM585 251h1v1h-1zM483 249h4v3h-4zM531 251h1v1h-1zM465 251h5v1h-5zM445 249h5v3h-5zM491 249h4v3h-4zM367 251h37v1h-37zM507 248h4v4h-4zM516 249h4v3h-4zM499 249h4v3h-4zM562 251h3v1h-3zM474 248h4v4h-4zM457 251h1v1h-1zM430 251h11v1h-11zM467 252h3v1h-3zM492 252h3v1h-3zM509 252h2v1h-2zM432 252h9v1h-9zM532 252h1v1h-1zM564 252h1v1h-1zM476 252h2v1h-2zM458 252h1v1h-1zM517 252h3v1h-3zM414 252h11v1h-11zM367 252h39v1h-39zM500 252h3v1h-3zM484 252h3v1h-3zM445 252h6v1h-6zM502 253h1v1h-1zM486 253h1v1h-1zM458 253h3v1h-3zM494 253h1v1h-1zM469 253h1v1h-1zM445 253h8v1h-8zM367 253h41v1h-41zM416 253h10v1h-10zM532 253h3v1h-3zM557 253h1v1h-1zM519 253h1v1h-1zM520 254h1v1h-1zM478 254h2v1h-2zM495 254h1v1h-1zM445 254h9v1h-9zM417 254h11v1h-11zM487 254h1v1h-1zM557 254h3v1h-3zM458 254h5v1h-5zM544 252h5v3h-5zM573 254h2v1h-2zM503 254h1v1h-1zM367 254h43v1h-43zM511 254h2v1h-2zM470 254h1v1h-1zM367 255h45v1h-45zM511 255h4v1h-4zM503 255h3v1h-3zM478 255h4v1h-4zM495 255h3v1h-3zM470 255h3v1h-3zM520 255h3v1h-3zM487 255h3v1h-3zM546 255h3v1h-3zM458 255h7v1h-7zM447 255h7v1h-7zM368 256h44v1h-44zM532 254h4v3h-4zM458 256h8v1h-8zM548 256h1v1h-1zM433 253h8v4h-8zM449 256h5v1h-5zM459 257h7v1h-7zM540 257h1v1h-1zM370 257h42v1h-42zM533 257h3v1h-3zM433 257h9v1h-9zM557 255h4v3h-4zM450 257h4v2h-4zM434 258h10v1h-10zM478 256h5v3h-5zM495 256h4v3h-4zM535 258h1v1h-1zM461 258h5v1h-5zM487 256h4v3h-4zM540 258h3v1h-3zM558 258h3v1h-3zM511 256h5v3h-5zM503 256h4v3h-4zM573 255h4v4h-4zM417 255h12v4h-12zM371 258h41v1h-41zM418 259h11v1h-11zM372 259h40v1h-40zM436 259h9v1h-9zM479 259h4v1h-4zM496 259h3v1h-3zM504 259h3v1h-3zM488 259h3v1h-3zM450 259h5v1h-5zM560 259h1v1h-1zM512 259h4v1h-4zM528 259h1v1h-1zM575 259h2v1h-2zM470 256h4v5h-4zM528 260h3v1h-3zM450 260h7v1h-7zM374 260h38v1h-38zM481 260h2v1h-2zM514 260h2v1h-2zM553 260h1v1h-1zM498 260h1v1h-1zM506 260h1v1h-1zM490 260h1v1h-1zM420 260h10v1h-10zM507 261h1v1h-1zM491 261h1v1h-1zM553 261h3v1h-3zM569 261h2v1h-2zM375 261h39v1h-39zM499 261h1v1h-1zM421 261h11v1h-11zM470 261h5v1h-5zM470 262h7v1h-7zM483 262h2v1h-2zM507 262h3v1h-3zM499 262h3v1h-3zM491 262h3v1h-3zM375 262h41v1h-41zM520 256h4v8h-4zM375 263h42v1h-42zM470 263h8v1h-8zM521 264h3v1h-3zM376 264h41v1h-41zM471 264h7v1h-7zM523 265h1v1h-1zM462 259h4v7h-4zM378 265h39v1h-39zM473 265h5v1h-5zM462 266h5v1h-5zM540 259h4v8h-4zM379 266h38v1h-38zM450 261h8v6h-8zM516 267h2v1h-2zM541 267h3v1h-3zM462 267h7v1h-7zM380 267h37v1h-37zM451 267h7v1h-7zM453 268h5v1h-5zM437 260h8v9h-8zM543 268h1v1h-1zM382 268h35v1h-35zM536 269h1v1h-1zM437 269h9v1h-9zM437 270h11v1h-11zM569 262h4v9h-4zM421 262h12v9h-12zM384 269h33v2h-33zM536 270h3v1h-3zM386 271h26v1h-26zM414 271h3v1h-3zM419 271h14v1h-14zM576 271h1v1h-1zM570 271h3v1h-3zM405 272h7v1h-7zM572 272h1v1h-1zM416 272h17v1h-17zM574 272h3v1h-3zM584 272h2v1h-2zM407 273h5v1h-5zM417 273h16v1h-16zM573 273h4v1h-4zM582 273h4v2h-4zM408 274h4v1h-4zM574 274h3v1h-3zM415 274h18v1h-18zM583 275h3v1h-3zM407 275h5v1h-5zM388 272h16v4h-16zM413 275h20v1h-20zM576 275h1v1h-1zM405 276h28v1h-28zM390 276h14v1h-14zM585 276h1v1h-1zM392 277h41v1h-41zM437 271h13v8h-13zM536 271h4v8h-4zM454 269h4v10h-4zM394 278h39v1h-39zM453 279h5v1h-5zM437 279h8v1h-8zM537 279h3v1h-3zM446 279h4v1h-4zM396 279h37v1h-37zM396 280h12v1h-12zM542 280h2v1h-2zM409 280h20v1h-20zM560 280h1v1h-1zM580 280h2v1h-2zM430 280h3v1h-3zM448 280h2v1h-2zM451 280h7v1h-7zM436 280h9v1h-9zM553 262h4v19h-4zM539 280h1v1h-1zM555 281h2v1h-2zM411 281h18v1h-18zM578 281h4v1h-4zM398 281h10v1h-10zM432 281h1v1h-1zM558 281h3v1h-3zM434 281h11v1h-11zM577 282h5v1h-5zM400 282h8v1h-8zM433 282h12v1h-12zM557 282h4v1h-4zM412 282h17v1h-17zM432 283h13v1h-13zM402 283h6v1h-6zM579 283h3v1h-3zM411 283h14v1h-14zM564 283h1v1h-1zM558 283h3v1h-3zM426 283h3v1h-3zM581 284h1v1h-1zM404 284h4v1h-4zM430 284h15v1h-15zM562 284h3v1h-3zM560 284h1v1h-1zM409 284h16v1h-16zM428 284h1v1h-1zM406 285h19v1h-19zM561 285h4v1h-4zM429 285h16v1h-16zM540 281h4v6h-4zM462 268h8v19h-8zM408 286h17v1h-17zM523 286h1v1h-1zM516 268h4v19h-4zM450 281h8v6h-8zM562 286h3v1h-3zM474 266h4v21h-4zM428 286h17v1h-17zM518 287h2v1h-2zM442 287h3v1h-3zM468 287h2v1h-2zM568 287h1v1h-1zM521 287h3v1h-3zM564 287h1v1h-1zM410 287h11v1h-11zM541 287h3v1h-3zM449 287h9v1h-9zM472 287h6v1h-6zM548 287h1v1h-1zM422 287h3v1h-3zM426 287h15v1h-15zM434 288h7v1h-7zM444 288h1v1h-1zM543 288h1v1h-1zM412 288h9v1h-9zM566 288h3v1h-3zM462 287h4v2h-4zM447 288h11v1h-11zM546 288h3v1h-3zM556 288h1v1h-1zM424 288h9v1h-9zM414 289h7v1h-7zM436 289h5v1h-5zM461 289h5v1h-5zM544 289h5v1h-5zM528 261h4v29h-4zM445 289h13v1h-13zM554 289h3v1h-3zM445 290h9v1h-9zM483 263h4v28h-4zM459 290h7v1h-7zM416 290h5v1h-5zM456 290h2v1h-2zM437 290h4v1h-4zM565 289h4v2h-4zM553 290h4v1h-4zM491 263h4v28h-4zM545 290h4v1h-4zM507 263h4v28h-4zM530 290h2v1h-2zM534 290h2v1h-2zM425 289h8v2h-8zM470 288h8v3h-8zM515 291h1v1h-1zM482 291h5v1h-5zM552 291h5v1h-5zM490 291h5v1h-5zM566 291h3v1h-3zM418 291h3v1h-3zM475 291h3v1h-3zM508 291h3v1h-3zM436 291h1v1h-1zM458 291h8v1h-8zM547 291h2v1h-2zM424 291h9v1h-9zM499 263h4v29h-4zM438 291h3v1h-3zM443 291h11v1h-11zM555 292h2v1h-2zM440 292h14v1h-14zM488 292h3v1h-3zM505 292h2v1h-2zM477 292h1v1h-1zM501 292h2v1h-2zM568 292h1v1h-1zM434 292h3v1h-3zM426 292h7v1h-7zM457 292h9v1h-9zM532 291h4v2h-4zM480 292h3v1h-3zM497 292h2v1h-2zM493 292h2v1h-2zM510 292h1v1h-1zM550 292h3v1h-3zM513 292h3v1h-3zM485 292h2v1h-2zM420 292h1v1h-1zM430 293h7v1h-7zM520 288h4v6h-4zM478 293h5v1h-5zM452 293h2v1h-2zM538 293h2v1h-2zM460 293h6v1h-6zM549 293h4v1h-4zM560 293h1v1h-1zM487 293h4v1h-4zM441 293h9v1h-9zM530 293h2v1h-2zM511 293h5v1h-5zM455 293h3v1h-3zM534 293h2v1h-2zM428 293h1v1h-1zM470 291h4v4h-4zM479 294h4v1h-4zM442 294h8v1h-8zM495 293h4v2h-4zM512 294h4v1h-4zM462 294h4v1h-4zM519 294h5v1h-5zM536 294h4v1h-4zM432 294h5v1h-5zM454 294h4v1h-4zM548 294h5v1h-5zM486 294h5v1h-5zM503 293h4v2h-4zM509 295h2v1h-2zM505 295h2v1h-2zM514 295h2v1h-2zM468 295h2v1h-2zM484 295h3v1h-3zM501 295h2v1h-2zM551 295h2v1h-2zM434 295h3v1h-3zM444 295h6v1h-6zM517 295h3v1h-3zM497 295h2v1h-2zM528 294h4v2h-4zM493 295h2v1h-2zM461 295h5v1h-5zM489 295h2v1h-2zM546 295h3v1h-3zM439 295h2v1h-2zM453 295h5v1h-5zM537 295h3v1h-3zM481 295h2v1h-2zM522 295h2v1h-2zM476 295h2v1h-2zM472 295h2v1h-2zM451 296h3v1h-3zM436 296h5v1h-5zM483 296h4v1h-4zM456 296h2v1h-2zM445 296h5v1h-5zM491 296h4v1h-4zM544 296h5v1h-5zM539 296h1v1h-1zM507 296h4v1h-4zM516 296h4v1h-4zM530 296h2v1h-2zM534 296h2v1h-2zM474 296h4v1h-4zM459 296h11v1h-11zM445 297h9v1h-9zM482 297h5v1h-5zM458 297h12v1h-12zM490 297h5v1h-5zM523 297h1v1h-1zM475 297h3v1h-3zM508 297h3v1h-3zM545 297h4v1h-4zM499 296h4v2h-4zM438 297h3v1h-3zM515 297h5v1h-5zM518 298h2v1h-2zM488 298h3v1h-3zM505 298h2v1h-2zM468 298h2v1h-2zM477 298h1v1h-1zM501 298h2v1h-2zM440 298h1v1h-1zM446 298h8v1h-8zM521 298h3v1h-3zM547 298h2v1h-2zM532 297h4v2h-4zM480 298h3v1h-3zM497 298h2v1h-2zM493 298h2v1h-2zM510 298h1v1h-1zM513 298h3v1h-3zM485 298h2v1h-2zM458 298h8v1h-8zM472 298h2v1h-2zM448 299h6v1h-6zM487 299h4v1h-4zM457 299h9v1h-9zM533 299h3v1h-3zM503 299h4v1h-4zM459 300h7v1h-7zM452 300h2v1h-2zM495 299h4v2h-4zM535 300h1v1h-1zM504 300h3v1h-3zM486 300h5v1h-5zM470 299h4v3h-4zM493 301h2v1h-2zM478 299h5v3h-5zM520 299h4v3h-4zM461 301h5v1h-5zM527 301h1v1h-1zM489 301h2v1h-2zM506 301h1v1h-1zM511 299h5v3h-5zM497 301h2v1h-2zM484 301h3v1h-3zM501 301h2v1h-2zM464 302h2v1h-2zM522 302h2v1h-2zM491 302h4v1h-4zM471 302h3v1h-3zM512 302h4v1h-4zM479 302h8v1h-8zM481 303h6v1h-6zM490 303h5v1h-5zM514 303h2v1h-2zM499 302h4v2h-4zM473 303h1v1h-1zM485 304h2v1h-2zM493 304h2v1h-2zM501 304h2v1h-2z" fill="#a6a6a6"/>
<path d="M481 129h2v1h-2zM505 129h2v1h-2zM489 129h2v1h-2zM514 129h2v1h-2zM472 129h2v1h-2zM497 129h2v1h-2zM470 130h4v1h-4zM479 130h4v1h-4zM512 130h4v1h-4zM468 131h6v1h-6zM466 132h8v1h-8zM478 131h5v3h-5zM495 130h4v4h-4zM456 133h2v1h-2zM487 130h4v4h-4zM464 133h10v1h-10zM530 133h2v1h-2zM511 131h5v3h-5zM503 130h4v4h-4zM487 134h2v1h-2zM511 134h3v1h-3zM503 134h2v1h-2zM462 134h10v1h-10zM478 134h3v1h-3zM454 134h4v1h-4zM495 134h2v1h-2zM511 135h1v1h-1zM462 135h8v1h-8zM478 135h1v1h-1zM584 135h2v1h-2zM452 135h6v1h-6zM582 136h4v1h-4zM592 136h2v1h-2zM450 136h8v1h-8zM462 136h6v1h-6zM448 137h10v1h-10zM583 137h3v1h-3zM462 137h4v1h-4zM590 137h4v1h-4zM528 134h4v4h-4zM462 138h2v1h-2zM528 138h2v1h-2zM446 138h10v1h-10zM489 138h2v1h-2zM591 138h3v1h-3zM585 138h1v1h-1zM497 138h2v1h-2zM593 139h1v1h-1zM487 139h4v1h-4zM444 139h10v1h-10zM485 140h6v1h-6zM510 140h1v1h-1zM442 140h10v1h-10zM477 140h1v1h-1zM475 141h3v1h-3zM440 141h10v1h-10zM508 141h3v1h-3zM601 141h1v1h-1zM599 142h3v1h-3zM495 139h4v4h-4zM522 142h2v1h-2zM483 141h8v2h-8zM465 142h1v1h-1zM473 142h5v1h-5zM438 142h10v1h-10zM483 143h6v1h-6zM495 143h3v1h-3zM463 143h3v1h-3zM471 143h7v1h-7zM436 143h10v1h-10zM601 143h1v1h-1zM495 144h1v1h-1zM434 144h10v1h-10zM461 144h5v1h-5zM507 142h4v3h-4zM483 144h4v1h-4zM470 144h8v1h-8zM432 145h10v1h-10zM470 145h7v1h-7zM459 145h7v1h-7zM597 145h1v1h-1zM483 145h2v1h-2zM507 145h3v1h-3zM520 143h4v4h-4zM430 146h10v1h-10zM507 146h1v1h-1zM457 146h9v1h-9zM470 146h5v1h-5zM605 146h1v1h-1zM428 147h10v1h-10zM481 147h2v1h-2zM595 146h3v2h-3zM498 147h1v1h-1zM470 147h3v1h-3zM455 147h10v1h-10zM506 147h1v1h-1zM520 147h3v1h-3zM490 147h1v1h-1zM520 148h1v1h-1zM479 148h4v1h-4zM597 148h1v1h-1zM496 148h3v1h-3zM504 148h3v1h-3zM488 148h3v1h-3zM453 148h10v1h-10zM426 148h10v1h-10zM603 147h3v2h-3zM470 148h1v1h-1zM469 149h1v1h-1zM477 149h6v1h-6zM425 149h9v1h-9zM609 149h1v1h-1zM519 149h1v1h-1zM605 149h1v1h-1zM451 149h10v1h-10zM467 150h3v1h-3zM427 150h5v1h-5zM449 150h10v1h-10zM517 150h3v1h-3zM607 150h3v1h-3zM475 150h8v1h-8zM474 151h9v1h-9zM495 149h4v3h-4zM487 149h4v3h-4zM465 151h5v1h-5zM609 151h1v1h-1zM428 151h2v1h-2zM503 149h4v3h-4zM447 151h10v1h-10zM600 152h2v1h-2zM463 152h7v1h-7zM503 152h3v1h-3zM495 152h3v1h-3zM445 152h10v1h-10zM474 152h7v1h-7zM426 152h3v1h-3zM487 152h3v1h-3zM613 152h2v1h-2zM461 153h9v1h-9zM495 153h1v1h-1zM611 153h4v1h-4zM443 153h10v1h-10zM487 153h1v1h-1zM608 153h2v1h-2zM474 153h5v1h-5zM598 153h4v1h-4zM516 151h4v3h-4zM503 153h1v1h-1zM424 153h5v1h-5zM502 154h1v1h-1zM474 154h3v1h-3zM486 154h1v1h-1zM441 154h10v1h-10zM494 154h1v1h-1zM600 154h2v1h-2zM459 154h10v1h-10zM607 154h3v1h-3zM613 154h2v1h-2zM516 154h3v1h-3zM422 154h7v1h-7zM457 155h10v1h-10zM492 155h3v1h-3zM609 155h1v1h-1zM516 155h1v1h-1zM439 155h10v1h-10zM474 155h1v1h-1zM500 155h3v1h-3zM484 155h3v1h-3zM420 155h9v1h-9zM515 156h1v1h-1zM482 156h5v1h-5zM418 156h10v1h-10zM455 156h10v1h-10zM437 156h10v1h-10zM473 156h1v1h-1zM435 157h10v1h-10zM453 157h10v1h-10zM480 157h7v1h-7zM513 157h3v1h-3zM471 157h3v1h-3zM618 157h1v1h-1zM417 157h9v1h-9zM614 158h1v1h-1zM604 158h2v1h-2zM491 156h4v3h-4zM433 158h10v1h-10zM419 158h5v1h-5zM499 156h4v3h-4zM478 158h9v1h-9zM616 158h3v1h-3zM469 158h5v1h-5zM451 158h10v1h-10zM612 159h7v1h-7zM478 159h8v1h-8zM435 159h6v1h-6zM449 159h10v1h-10zM602 159h4v1h-4zM499 159h3v1h-3zM467 159h7v1h-7zM491 159h3v1h-3zM421 159h1v1h-1zM617 160h2v1h-2zM611 160h4v1h-4zM465 160h9v1h-9zM622 160h1v1h-1zM437 160h2v1h-2zM419 160h2v1h-2zM491 160h1v1h-1zM499 160h1v1h-1zM511 158h5v3h-5zM478 160h6v1h-6zM604 160h2v1h-2zM447 160h10v1h-10zM511 161h4v1h-4zM417 161h4v1h-4zM463 161h10v1h-10zM435 161h2v1h-2zM498 161h1v1h-1zM620 161h3v1h-3zM506 161h1v1h-1zM490 161h1v1h-1zM445 161h10v1h-10zM613 161h2v1h-2zM443 162h10v1h-10zM433 162h4v1h-4zM496 162h3v1h-3zM418 162h3v1h-3zM504 162h3v1h-3zM488 162h3v1h-3zM621 162h2v1h-2zM604 162h2v1h-2zM511 162h2v1h-2zM461 162h10v1h-10zM614 162h1v1h-1zM441 163h10v1h-10zM612 163h3v1h-3zM478 161h5v3h-5zM459 163h10v1h-10zM431 163h6v1h-6zM420 163h1v1h-1zM602 163h4v1h-4zM476 164h7v1h-7zM457 164h10v1h-10zM429 164h8v1h-8zM419 164h2v1h-2zM621 164h2v1h-2zM439 164h10v1h-10zM610 164h5v1h-5zM604 164h2v1h-2zM474 165h9v1h-9zM612 165h3v1h-3zM495 163h4v3h-4zM455 165h11v1h-11zM417 165h4v1h-4zM487 163h4v3h-4zM523 165h1v1h-1zM431 165h16v1h-16zM619 165h4v1h-4zM614 166h1v1h-1zM433 166h2v1h-2zM521 166h3v1h-3zM472 166h10v1h-10zM418 166h3v1h-3zM495 166h3v1h-3zM621 166h2v1h-2zM453 166h13v1h-13zM503 163h4v4h-4zM487 166h3v1h-3zM605 166h1v1h-1zM439 166h6v1h-6zM495 167h1v1h-1zM626 167h1v1h-1zM487 167h1v1h-1zM470 167h10v1h-10zM451 167h15v1h-15zM503 167h2v1h-2zM441 167h2v1h-2zM420 167h1v1h-1zM603 167h3v1h-3zM431 167h2v1h-2zM439 168h2v1h-2zM486 168h1v1h-1zM494 168h1v1h-1zM449 168h17v1h-17zM419 168h2v1h-2zM624 168h3v1h-3zM621 168h2v1h-2zM429 168h4v1h-4zM604 168h2v1h-2zM447 169h19v1h-19zM501 169h2v1h-2zM520 167h4v3h-4zM625 169h2v1h-2zM492 169h3v1h-3zM437 169h4v1h-4zM417 169h4v1h-4zM509 169h2v1h-2zM617 169h6v1h-6zM484 169h3v1h-3zM427 169h6v1h-6zM435 170h6v1h-6zM615 170h4v1h-4zM445 170h21v1h-21zM418 170h3v1h-3zM520 170h3v1h-3zM621 170h2v1h-2zM425 170h8v1h-8zM605 170h1v1h-1zM520 171h1v1h-1zM426 171h15v1h-15zM625 171h2v1h-2zM420 171h1v1h-1zM443 171h21v1h-21zM616 171h3v1h-3zM428 172h3v1h-3zM621 172h6v1h-6zM419 172h2v1h-2zM435 172h27v1h-27zM618 172h1v1h-1zM603 171h3v2h-3zM470 168h8v5h-8zM427 173h2v1h-2zM450 173h10v1h-10zM625 173h2v1h-2zM417 173h4v1h-4zM468 173h10v1h-10zM443 173h6v1h-6zM507 170h4v4h-4zM617 173h6v1h-6zM437 173h2v1h-2zM507 174h2v1h-2zM452 174h6v1h-6zM466 174h10v1h-10zM445 174h2v1h-2zM615 174h4v1h-4zM418 174h3v1h-3zM620 174h3v1h-3zM436 174h1v1h-1zM483 170h4v5h-4zM605 173h1v2h-1zM425 174h4v1h-4zM629 174h2v1h-2zM515 175h1v1h-1zM625 175h6v1h-6zM444 175h1v1h-1zM482 175h5v1h-5zM622 175h1v1h-1zM454 175h2v1h-2zM434 175h3v1h-3zM464 175h10v1h-10zM426 175h3v1h-3zM616 175h3v1h-3zM452 176h2v1h-2zM621 176h6v1h-6zM435 176h2v1h-2zM420 175h1v2h-1zM480 176h7v1h-7zM513 176h3v1h-3zM603 175h3v2h-3zM442 176h3v1h-3zM618 176h1v1h-1zM462 176h12v1h-12zM428 176h1v1h-1zM629 176h2v1h-2zM450 177h4v1h-4zM418 177h3v1h-3zM624 177h3v1h-3zM460 177h14v1h-14zM617 177h6v1h-6zM440 177h5v1h-5zM626 178h1v1h-1zM615 178h4v1h-4zM417 178h4v1h-4zM448 178h6v1h-6zM620 178h3v1h-3zM436 178h1v1h-1zM605 177h1v2h-1zM438 178h7v1h-7zM629 178h2v1h-2zM458 178h16v1h-16zM625 179h6v1h-6zM446 179h8v1h-8zM456 179h18v1h-18zM622 179h1v1h-1zM419 179h2v1h-2zM603 179h3v1h-3zM613 179h6v1h-6zM439 179h6v1h-6zM432 179h1v1h-1zM434 179h3v2h-3zM601 180h5v1h-5zM441 180h33v1h-33zM629 180h2v1h-2zM622 180h5v1h-5zM430 180h3v2h-3zM624 181h3v1h-3zM440 181h34v1h-34zM611 180h8v2h-8zM626 182h1v1h-1zM620 181h3v2h-3zM436 181h1v2h-1zM629 182h2v1h-2zM599 181h7v2h-7zM443 182h31v1h-31zM613 182h5v1h-5zM432 182h1v1h-1zM626 183h5v1h-5zM434 183h3v1h-3zM614 183h2v1h-2zM445 183h29v1h-29zM438 182h3v2h-3zM601 183h4v1h-4zM628 184h3v1h-3zM444 184h30v1h-30zM612 184h3v1h-3zM622 183h1v2h-1zM602 184h1v1h-1zM428 184h1v1h-1zM611 185h4v1h-4zM440 184h1v2h-1zM600 185h2v1h-2zM436 184h1v2h-1zM624 184h3v2h-3zM634 185h1v1h-1zM442 185h3v1h-3zM447 185h27v1h-27zM426 185h3v1h-3zM630 185h1v2h-1zM598 186h4v1h-4zM620 185h3v2h-3zM449 186h25v1h-25zM425 186h4v1h-4zM443 186h2v1h-2zM438 186h3v1h-3zM613 186h2v1h-2zM448 187h26v1h-26zM440 187h1v1h-1zM427 187h2v1h-2zM614 187h1v1h-1zM626 186h1v2h-1zM434 186h3v2h-3zM596 187h6v1h-6zM632 186h3v2h-3zM628 187h3v2h-3zM444 188h1v1h-1zM594 188h8v1h-8zM612 188h3v1h-3zM622 187h1v2h-1zM436 188h1v1h-1zM446 188h4v1h-4zM451 188h23v1h-23zM439 189h2v1h-2zM447 189h3v1h-3zM610 189h5v1h-5zM620 189h3v1h-3zM624 188h3v2h-3zM634 188h1v2h-1zM442 189h3v1h-3zM596 189h6v1h-6zM453 189h21v1h-21zM630 189h1v2h-1zM440 190h1v1h-1zM444 190h1v1h-1zM449 190h1v1h-1zM619 190h4v1h-4zM608 190h7v1h-7zM452 190h22v1h-22zM598 190h2v1h-2zM448 191h26v1h-26zM596 191h2v1h-2zM607 191h8v1h-8zM626 190h1v2h-1zM621 191h2v1h-2zM632 190h3v2h-3zM628 191h3v2h-3zM444 192h1v1h-1zM622 192h1v1h-1zM594 192h4v1h-4zM609 192h5v1h-5zM624 192h3v1h-3zM620 193h7v1h-7zM592 193h6v1h-6zM634 192h1v2h-1zM610 193h2v1h-2zM446 192h28v2h-28zM448 194h26v1h-26zM630 193h1v2h-1zM625 194h2v1h-2zM608 194h2v1h-2zM590 194h8v1h-8zM618 194h5v1h-5zM626 195h1v1h-1zM606 195h4v1h-4zM588 195h10v1h-10zM616 195h7v1h-7zM511 177h5v19h-5zM450 195h24v1h-24zM478 177h9v19h-9zM632 194h3v2h-3zM507 196h2v1h-2zM628 195h3v2h-3zM586 196h10v1h-10zM452 196h24v1h-24zM511 196h3v1h-3zM604 196h6v1h-6zM615 196h8v1h-8zM624 196h3v1h-3zM478 196h3v1h-3zM454 197h25v1h-25zM507 197h5v1h-5zM584 197h10v1h-10zM617 197h10v1h-10zM602 197h8v1h-8zM634 196h1v2h-1zM630 197h1v2h-1zM582 198h10v1h-10zM491 170h4v29h-4zM604 198h6v1h-6zM619 198h8v1h-8zM507 198h4v1h-4zM499 170h4v29h-4zM483 196h4v3h-4zM456 198h22v1h-22zM507 199h2v1h-2zM487 199h2v1h-2zM491 199h2v1h-2zM628 199h3v1h-3zM458 199h22v1h-22zM583 199h7v1h-7zM617 199h10v1h-10zM499 199h2v1h-2zM503 199h2v1h-2zM483 199h2v1h-2zM606 199h2v1h-2zM495 199h2v1h-2zM632 198h3v2h-3zM585 200h3v1h-3zM460 200h22v1h-22zM634 200h1v1h-1zM627 200h4v1h-4zM621 200h5v1h-5zM604 200h2v1h-2zM615 200h4v1h-4zM495 200h4v2h-4zM463 201h20v1h-20zM623 201h1v1h-1zM487 200h4v2h-4zM584 201h2v1h-2zM602 201h4v1h-4zM613 201h6v1h-6zM503 200h4v2h-4zM629 201h2v1h-2zM465 202h3v1h-3zM491 202h2v1h-2zM487 202h2v1h-2zM582 202h4v1h-4zM633 202h2v1h-2zM499 202h2v1h-2zM503 202h2v1h-2zM621 202h2v1h-2zM472 202h12v1h-12zM495 202h2v1h-2zM600 202h6v1h-6zM611 202h8v1h-8zM598 203h8v1h-8zM474 203h12v1h-12zM609 203h14v1h-14zM629 203h6v1h-6zM580 203h6v1h-6zM578 204h8v1h-8zM491 203h4v2h-4zM627 204h8v1h-8zM607 204h10v1h-10zM499 203h4v2h-4zM596 204h10v1h-10zM478 204h3v1h-3zM621 204h2v1h-2zM476 204h1v1h-1zM511 204h2v1h-2zM484 204h3v1h-3zM576 205h10v1h-10zM491 205h2v1h-2zM488 205h1v1h-1zM625 205h10v1h-10zM594 205h11v1h-11zM499 205h2v1h-2zM496 205h1v1h-1zM608 205h7v1h-7zM610 206h3v1h-3zM498 206h1v1h-1zM592 206h11v1h-11zM490 206h1v1h-1zM574 206h10v1h-10zM621 206h14v1h-14zM609 207h2v1h-2zM572 207h10v1h-10zM590 207h11v1h-11zM625 207h10v1h-10zM619 207h4v1h-4zM570 208h10v1h-10zM591 208h8v1h-8zM627 208h8v1h-8zM617 208h6v1h-6zM607 208h3v1h-3zM625 209h6v1h-6zM568 209h10v1h-10zM615 209h8v1h-8zM605 209h5v1h-5zM593 209h4v1h-4zM633 209h2v1h-2zM613 210h14v1h-14zM566 210h10v1h-10zM593 210h2v1h-2zM603 210h7v1h-7zM629 210h2v1h-2zM633 211h2v1h-2zM611 211h16v1h-16zM601 211h9v1h-9zM564 211h10v1h-10zM556 211h1v1h-1zM591 211h3v1h-3zM432 211h1v1h-1zM589 212h5v1h-5zM430 212h3v1h-3zM612 212h15v1h-15zM562 212h10v1h-10zM629 212h6v1h-6zM599 212h10v1h-10zM554 212h3v1h-3zM614 213h3v1h-3zM552 213h5v1h-5zM587 213h7v1h-7zM599 213h8v1h-8zM620 213h15v1h-15zM561 213h9v1h-9zM550 214h7v1h-7zM585 214h9v1h-9zM622 214h13v1h-13zM561 214h7v1h-7zM613 214h2v1h-2zM601 214h4v1h-4zM611 215h4v1h-4zM561 215h5v1h-5zM548 215h9v1h-9zM601 215h2v1h-2zM429 213h4v3h-4zM621 215h14v1h-14zM583 215h10v1h-10zM599 216h3v1h-3zM624 216h11v1h-11zM429 216h3v1h-3zM546 216h10v1h-10zM581 216h10v1h-10zM619 216h4v1h-4zM609 216h6v1h-6zM561 216h3v1h-3zM607 217h8v1h-8zM579 217h10v1h-10zM453 217h1v1h-1zM561 217h1v1h-1zM429 217h1v1h-1zM617 217h6v1h-6zM626 217h9v1h-9zM544 217h10v1h-10zM597 217h5v1h-5zM451 218h3v1h-3zM595 218h7v1h-7zM542 218h10v1h-10zM605 218h18v1h-18zM577 218h10v1h-10zM534 218h2v1h-2zM625 218h10v1h-10zM593 219h9v1h-9zM575 219h10v1h-10zM540 219h10v1h-10zM523 219h1v1h-1zM532 219h4v1h-4zM603 219h32v1h-32zM540 220h8v1h-8zM573 220h10v1h-10zM424 220h1v1h-1zM464 220h2v1h-2zM591 220h44v1h-44zM521 220h3v1h-3zM530 220h6v1h-6zM564 220h1v1h-1zM612 221h23v1h-23zM450 219h4v3h-4zM486 221h1v1h-1zM519 221h5v1h-5zM589 221h20v1h-20zM571 221h10v1h-10zM540 221h6v1h-6zM562 221h3v1h-3zM422 221h3v1h-3zM540 222h4v1h-4zM493 222h2v1h-2zM450 222h3v1h-3zM509 222h2v1h-2zM517 222h7v1h-7zM587 222h20v1h-20zM476 222h2v1h-2zM569 222h10v1h-10zM528 221h8v2h-8zM560 222h5v1h-5zM614 222h21v1h-21zM484 222h3v1h-3zM501 222h2v1h-2zM585 223h20v1h-20zM516 223h8v1h-8zM528 223h6v1h-6zM558 223h7v1h-7zM540 223h2v1h-2zM613 223h22v1h-22zM450 223h1v1h-1zM569 223h8v1h-8zM611 224h4v1h-4zM556 224h9v1h-9zM616 224h11v1h-11zM462 221h4v4h-4zM629 224h6v1h-6zM569 224h6v1h-6zM516 224h7v1h-7zM595 224h8v1h-8zM421 222h4v3h-4zM528 224h4v1h-4zM583 224h10v1h-10zM462 225h2v1h-2zM516 225h5v1h-5zM483 223h4v3h-4zM597 225h4v1h-4zM569 225h4v1h-4zM421 225h3v1h-3zM528 225h2v1h-2zM581 225h10v1h-10zM554 225h11v1h-11zM631 225h4v1h-4zM609 225h6v1h-6zM618 225h9v2h-9zM483 226h3v1h-3zM607 226h8v1h-8zM579 226h10v1h-10zM552 226h11v1h-11zM491 223h4v4h-4zM597 226h2v1h-2zM507 223h4v4h-4zM630 226h5v1h-5zM499 223h4v4h-4zM516 226h3v1h-3zM474 223h4v4h-4zM569 226h2v1h-2zM421 226h1v1h-1zM507 227h2v1h-2zM542 227h2v1h-2zM491 227h2v1h-2zM550 227h11v1h-11zM605 227h10v1h-10zM620 227h7v1h-7zM474 227h2v1h-2zM595 227h3v1h-3zM499 227h2v1h-2zM516 227h1v1h-1zM577 227h10v1h-10zM483 227h1v1h-1zM443 227h2v1h-2zM616 227h3v1h-3zM628 227h7v1h-7zM540 228h4v1h-4zM575 228h10v1h-10zM549 228h10v1h-10zM593 228h5v1h-5zM603 228h16v1h-16zM549 229h8v1h-8zM573 229h10v1h-10zM538 229h6v1h-6zM456 229h2v1h-2zM591 229h7v1h-7zM622 228h13v2h-13zM601 229h18v1h-18zM530 229h2v1h-2zM423 230h2v1h-2zM589 230h9v1h-9zM563 230h2v1h-2zM571 230h10v1h-10zM549 230h6v1h-6zM620 230h15v1h-15zM599 230h20v1h-20zM528 230h4v1h-4zM441 228h4v4h-4zM536 230h8v2h-8zM587 231h48v1h-48zM509 231h2v1h-2zM518 231h2v1h-2zM549 231h4v1h-4zM476 231h2v1h-2zM569 231h10v1h-10zM561 231h4v1h-4zM468 231h2v1h-2zM526 231h6v1h-6zM585 232h48v1h-48zM536 232h6v1h-6zM441 232h2v1h-2zM559 232h6v1h-6zM507 232h4v1h-4zM549 232h2v1h-2zM557 233h8v1h-8zM524 232h8v2h-8zM583 233h48v1h-48zM505 233h6v1h-6zM410 233h2v1h-2zM536 233h4v1h-4zM489 233h2v1h-2zM454 230h4v4h-4zM497 233h2v1h-2zM439 234h2v1h-2zM536 234h2v1h-2zM454 234h2v1h-2zM524 234h6v1h-6zM547 234h2v1h-2zM555 234h10v1h-10zM421 231h4v4h-4zM466 232h4v4h-4zM524 235h4v1h-4zM553 235h10v1h-10zM503 234h8v2h-8zM421 235h2v1h-2zM516 232h4v4h-4zM545 235h4v1h-4zM474 232h4v4h-4zM474 236h3v1h-3zM553 236h8v1h-8zM582 234h49v3h-49zM516 236h2v1h-2zM543 236h6v1h-6zM466 236h2v1h-2zM524 236h2v1h-2zM503 236h7v1h-7zM569 232h8v5h-8zM607 237h24v1h-24zM495 234h4v4h-4zM408 234h4v4h-4zM487 234h4v4h-4zM503 237h5v1h-5zM541 237h8v1h-8zM474 237h1v1h-1zM553 237h6v1h-6zM582 237h14v1h-14zM567 237h10v1h-10zM600 237h6v1h-6zM487 238h2v1h-2zM609 238h22v1h-22zM503 238h3v1h-3zM456 238h2v1h-2zM437 235h4v4h-4zM539 238h10v1h-10zM553 238h4v1h-4zM565 238h10v1h-10zM602 238h2v1h-2zM582 238h12v1h-12zM530 238h2v1h-2zM495 238h2v1h-2zM408 238h2v1h-2zM553 239h2v1h-2zM581 239h11v1h-11zM600 239h2v1h-2zM437 239h2v1h-2zM503 239h1v1h-1zM610 239h21v1h-21zM563 239h10v1h-10zM528 239h4v1h-4zM537 239h10v1h-10zM502 240h1v1h-1zM536 240h9v1h-9zM611 240h20v1h-20zM493 240h2v1h-2zM469 240h1v1h-1zM518 240h2v1h-2zM608 240h2v1h-2zM510 240h1v1h-1zM598 240h4v1h-4zM485 240h2v1h-2zM561 240h10v1h-10zM526 240h6v1h-6zM477 240h1v1h-1zM579 240h11v1h-11zM551 241h2v1h-2zM467 241h3v1h-3zM559 241h10v1h-10zM606 241h4v1h-4zM435 241h2v1h-2zM475 241h3v1h-3zM508 241h3v1h-3zM577 241h11v1h-11zM536 241h7v1h-7zM596 241h6v1h-6zM500 241h3v1h-3zM613 241h18v1h-18zM614 242h17v1h-17zM524 241h8v2h-8zM594 242h8v1h-8zM557 242h10v1h-10zM536 242h5v1h-5zM549 242h4v1h-4zM604 242h6v1h-6zM454 239h4v4h-4zM575 242h11v1h-11zM557 243h8v1h-8zM547 243h6v1h-6zM454 243h2v1h-2zM524 243h6v1h-6zM612 243h18v1h-18zM592 243h18v1h-18zM573 243h11v1h-11zM536 243h3v1h-3zM466 242h4v3h-4zM483 241h4v4h-4zM571 244h11v1h-11zM557 244h6v1h-6zM590 244h38v1h-38zM491 241h4v4h-4zM536 244h1v1h-1zM545 244h8v1h-8zM507 242h4v3h-4zM516 241h4v4h-4zM499 242h4v3h-4zM474 242h4v3h-4zM474 245h3v1h-3zM491 245h2v1h-2zM452 245h2v1h-2zM433 242h4v4h-4zM516 245h2v1h-2zM535 245h1v1h-1zM543 245h10v1h-10zM588 245h39v1h-39zM466 245h3v1h-3zM483 245h2v1h-2zM569 245h13v1h-13zM460 245h2v1h-2zM406 245h2v1h-2zM507 245h3v1h-3zM499 245h3v1h-3zM541 246h10v1h-10zM427 246h2v1h-2zM524 244h4v3h-4zM567 246h15v1h-15zM507 246h1v1h-1zM533 246h3v1h-3zM499 246h1v1h-1zM474 246h1v1h-1zM466 246h1v1h-1zM433 246h2v1h-2zM522 247h6v1h-6zM481 247h2v1h-2zM498 247h1v1h-1zM489 247h2v1h-2zM506 247h1v1h-1zM540 247h9v1h-9zM514 247h2v1h-2zM557 245h4v3h-4zM473 247h1v1h-1zM479 248h4v1h-4zM540 248h7v1h-7zM496 248h3v1h-3zM504 248h3v1h-3zM586 246h41v3h-41zM471 248h3v1h-3zM555 248h6v1h-6zM512 248h4v1h-4zM450 246h4v4h-4zM553 249h8v1h-8zM565 247h17v3h-17zM404 246h4v4h-4zM532 247h4v3h-4zM458 246h4v4h-4zM520 248h8v2h-8zM540 249h5v1h-5zM586 249h40v1h-40zM444 250h1v1h-1zM404 250h2v1h-2zM458 250h2v1h-2zM551 250h10v1h-10zM586 250h38v1h-38zM520 250h6v1h-6zM532 250h3v1h-3zM450 250h2v1h-2zM565 250h15v1h-15zM425 247h4v4h-4zM470 249h4v3h-4zM540 250h4v2h-4zM520 251h4v1h-4zM478 249h5v3h-5zM495 249h4v3h-4zM549 251h10v1h-10zM487 248h4v4h-4zM532 251h1v1h-1zM565 251h13v1h-13zM425 251h2v1h-2zM442 251h3v1h-3zM511 249h5v3h-5zM503 249h4v3h-4zM586 251h37v1h-37zM487 252h2v1h-2zM539 252h5v1h-5zM565 252h11v1h-11zM584 252h39v1h-39zM503 252h3v1h-3zM456 252h2v1h-2zM511 252h3v1h-3zM495 252h3v1h-3zM470 252h3v1h-3zM478 252h3v1h-3zM531 252h1v1h-1zM520 252h2v1h-2zM511 253h1v1h-1zM529 253h3v1h-3zM495 253h1v1h-1zM537 253h7v1h-7zM478 253h1v1h-1zM582 253h41v1h-41zM503 253h1v1h-1zM564 253h10v1h-10zM470 253h1v1h-1zM432 253h1v1h-1zM502 254h1v1h-1zM441 252h4v3h-4zM527 254h5v1h-5zM562 254h11v1h-11zM494 254h1v1h-1zM536 254h8v1h-8zM469 254h1v1h-1zM518 254h2v1h-2zM430 254h3v1h-3zM580 254h43v1h-43zM510 254h1v1h-1zM485 254h2v1h-2zM415 254h2v1h-2zM477 254h1v1h-1zM467 255h3v1h-3zM492 255h3v1h-3zM441 255h3v1h-3zM475 255h3v1h-3zM508 255h3v1h-3zM578 255h45v1h-45zM536 255h7v1h-7zM525 255h7v1h-7zM413 255h4v1h-4zM500 255h3v1h-3zM549 252h8v5h-8zM524 256h8v1h-8zM536 256h5v1h-5zM454 253h4v4h-4zM577 256h45v1h-45zM441 256h1v1h-1zM454 257h3v1h-3zM524 257h7v1h-7zM577 257h43v1h-43zM448 257h2v1h-2zM429 255h4v3h-4zM547 257h10v1h-10zM561 255h12v4h-12zM483 255h4v4h-4zM577 258h42v1h-42zM491 256h4v3h-4zM446 258h4v1h-4zM536 257h4v2h-4zM507 256h4v3h-4zM412 256h5v3h-5zM454 258h1v1h-1zM499 256h4v3h-4zM545 258h10v1h-10zM474 256h4v3h-4zM429 258h3v1h-3zM524 258h5v1h-5zM474 259h3v1h-3zM483 259h3v1h-3zM412 259h3v1h-3zM535 259h5v1h-5zM577 259h41v1h-41zM461 259h1v1h-1zM561 259h11v1h-11zM429 259h1v1h-1zM507 259h3v1h-3zM491 259h3v1h-3zM499 259h3v1h-3zM560 260h10v1h-10zM533 260h7v1h-7zM507 260h1v1h-1zM436 260h1v1h-1zM459 260h3v1h-3zM491 260h1v1h-1zM516 255h4v6h-4zM499 260h1v1h-1zM474 260h1v1h-1zM483 260h1v1h-1zM412 260h1v1h-1zM577 260h39v1h-39zM558 261h11v1h-11zM482 261h1v1h-1zM434 261h3v1h-3zM498 261h1v1h-1zM419 261h2v1h-2zM506 261h1v1h-1zM490 261h1v1h-1zM576 261h39v1h-39zM515 261h5v1h-5zM574 262h41v1h-41zM496 262h3v1h-3zM513 262h7v1h-7zM504 262h3v1h-3zM488 262h3v1h-3zM480 262h3v1h-3zM466 256h4v8h-4zM573 263h42v1h-42zM511 263h9v1h-9zM466 264h3v1h-3zM573 264h41v1h-41zM511 264h8v1h-8zM573 265h39v1h-39zM524 259h4v7h-4zM511 265h6v1h-6zM466 265h1v1h-1zM523 266h5v1h-5zM532 261h8v6h-8zM445 259h5v8h-5zM473 266h1v1h-1zM573 266h37v2h-37zM445 267h4v1h-4zM471 267h3v1h-3zM532 267h7v1h-7zM521 267h7v1h-7zM573 268h35v1h-35zM445 268h2v1h-2zM532 268h5v1h-5zM453 269h1v1h-1zM544 259h9v11h-9zM451 270h3v1h-3zM542 270h11v1h-11zM417 262h4v9h-4zM557 262h12v9h-12zM573 269h33v2h-33zM557 271h13v1h-13zM573 271h3v1h-3zM577 271h27v1h-27zM412 271h2v1h-2zM417 271h2v1h-2zM404 272h1v1h-1zM577 272h7v1h-7zM557 272h15v1h-15zM412 272h4v1h-4zM573 272h1v1h-1zM557 273h16v1h-16zM404 273h3v1h-3zM412 273h5v1h-5zM412 274h3v1h-3zM577 273h5v2h-5zM404 274h4v1h-4zM557 274h17v1h-17zM557 275h19v1h-19zM586 272h16v4h-16zM404 275h3v1h-3zM412 275h1v1h-1zM577 275h6v1h-6zM586 276h14v1h-14zM404 276h1v1h-1zM557 276h28v1h-28zM557 277h41v1h-41zM450 271h4v8h-4zM532 269h4v10h-4zM557 278h39v1h-39zM433 262h4v18h-4zM450 279h3v1h-3zM532 279h5v1h-5zM540 271h13v9h-13zM445 279h1v1h-1zM557 279h37v1h-37zM557 280h3v1h-3zM433 280h3v1h-3zM408 280h1v1h-1zM544 280h9v1h-9zM532 280h7v1h-7zM450 280h1v1h-1zM582 280h12v1h-12zM540 280h2v1h-2zM445 280h3v1h-3zM561 280h19v1h-19zM429 280h1v1h-1zM582 281h10v1h-10zM433 281h1v1h-1zM557 281h1v1h-1zM408 281h3v1h-3zM561 281h17v1h-17zM544 281h11v1h-11zM429 281h3v1h-3zM582 282h8v1h-8zM544 282h13v1h-13zM408 282h4v1h-4zM429 282h4v1h-4zM561 282h16v1h-16zM425 283h1v1h-1zM565 283h14v1h-14zM544 283h14v1h-14zM582 283h6v1h-6zM408 283h3v1h-3zM561 283h3v1h-3zM429 283h3v1h-3zM582 284h4v1h-4zM408 284h1v1h-1zM544 284h16v1h-16zM425 284h3v1h-3zM565 284h16v1h-16zM429 284h1v1h-1zM561 284h1v1h-1zM544 285h17v1h-17zM565 285h19v1h-19zM520 268h8v18h-8zM425 285h4v1h-4zM470 268h4v19h-4zM565 286h17v1h-17zM532 281h8v6h-8zM425 286h3v1h-3zM445 281h5v6h-5zM544 286h18v1h-18zM520 286h3v1h-3zM511 266h5v21h-5zM425 287h1v1h-1zM569 287h11v1h-11zM421 287h1v1h-1zM445 287h4v1h-4zM470 287h2v1h-2zM549 287h15v1h-15zM441 287h1v1h-1zM466 287h2v1h-2zM532 287h9v1h-9zM520 287h1v1h-1zM511 287h7v1h-7zM565 287h3v1h-3zM544 287h4v1h-4zM433 288h1v1h-1zM549 288h7v1h-7zM441 288h3v1h-3zM421 288h3v1h-3zM445 288h2v1h-2zM532 288h11v1h-11zM557 288h9v1h-9zM544 288h2v1h-2zM458 261h4v28h-4zM569 288h9v1h-9zM458 289h3v1h-3zM532 289h12v1h-12zM524 286h4v4h-4zM569 289h7v1h-7zM433 289h3v1h-3zM549 289h5v1h-5zM536 290h9v1h-9zM441 289h4v2h-4zM569 290h5v1h-5zM478 263h5v28h-5zM532 290h2v1h-2zM433 290h4v1h-4zM454 290h2v1h-2zM549 290h4v1h-4zM487 263h4v28h-4zM524 290h6v1h-6zM511 288h9v3h-9zM458 290h1v1h-1zM503 263h4v28h-4zM557 289h8v2h-8zM421 289h4v2h-4zM511 291h4v1h-4zM495 263h4v29h-4zM421 291h3v1h-3zM536 291h11v1h-11zM437 291h1v1h-1zM478 291h4v1h-4zM557 291h9v1h-9zM441 291h2v1h-2zM549 291h3v1h-3zM503 291h5v1h-5zM454 291h4v1h-4zM569 291h3v1h-3zM433 291h3v1h-3zM474 291h1v1h-1zM487 291h3v1h-3zM474 292h3v1h-3zM491 292h2v1h-2zM507 292h3v1h-3zM421 292h1v1h-1zM478 292h2v1h-2zM524 291h8v2h-8zM569 292h1v1h-1zM483 292h2v1h-2zM511 292h2v1h-2zM553 292h2v1h-2zM487 292h1v1h-1zM503 292h2v1h-2zM557 292h7v1h-7zM454 292h3v1h-3zM433 292h1v1h-1zM499 292h2v1h-2zM536 292h14v1h-14zM437 292h3v1h-3zM495 292h2v1h-2zM483 293h4v1h-4zM532 293h2v1h-2zM536 293h2v1h-2zM437 293h4v1h-4zM458 293h2v1h-2zM553 293h7v1h-7zM524 293h6v1h-6zM429 293h1v1h-1zM507 293h4v1h-4zM450 293h2v1h-2zM516 291h4v3h-4zM540 293h9v1h-9zM454 293h1v1h-1zM561 293h1v1h-1zM474 293h4v1h-4zM466 288h4v7h-4zM483 294h3v1h-3zM437 294h5v1h-5zM450 294h4v1h-4zM507 294h5v1h-5zM540 294h8v1h-8zM474 294h5v1h-5zM491 293h4v2h-4zM532 294h4v1h-4zM458 294h4v1h-4zM499 293h4v2h-4zM516 294h3v1h-3zM553 294h5v1h-5zM491 295h2v1h-2zM532 295h5v1h-5zM511 295h3v1h-3zM553 295h3v1h-3zM437 295h2v1h-2zM487 295h2v1h-2zM474 295h2v1h-2zM540 295h6v1h-6zM470 295h2v1h-2zM520 295h2v1h-2zM507 295h2v1h-2zM458 295h3v1h-3zM524 294h4v2h-4zM503 295h2v1h-2zM466 295h2v1h-2zM483 295h1v1h-1zM549 295h2v1h-2zM441 295h3v1h-3zM450 295h3v1h-3zM499 295h2v1h-2zM516 295h1v1h-1zM478 295h3v1h-3zM495 295h2v1h-2zM470 296h4v1h-4zM540 296h4v1h-4zM478 296h5v1h-5zM532 296h2v1h-2zM454 296h2v1h-2zM487 296h4v1h-4zM520 296h10v1h-10zM511 296h5v1h-5zM458 296h1v1h-1zM503 296h4v1h-4zM549 296h5v1h-5zM450 296h1v1h-1zM536 296h3v1h-3zM536 297h9v1h-9zM441 296h4v2h-4zM511 297h4v1h-4zM495 296h4v2h-4zM478 297h4v1h-4zM549 297h3v1h-3zM503 297h5v1h-5zM520 297h3v1h-3zM470 297h5v1h-5zM487 297h3v1h-3zM474 298h3v1h-3zM491 298h2v1h-2zM549 298h1v1h-1zM441 298h2v1h-2zM536 298h7v1h-7zM507 298h3v1h-3zM478 298h2v1h-2zM524 297h8v2h-8zM483 298h2v1h-2zM454 297h4v2h-4zM470 298h2v1h-2zM511 298h2v1h-2zM516 298h2v1h-2zM487 298h1v1h-1zM503 298h2v1h-2zM466 298h2v1h-2zM520 298h1v1h-1zM499 298h2v1h-2zM495 298h2v1h-2zM454 299h3v1h-3zM483 299h4v1h-4zM536 299h5v1h-5zM524 299h9v1h-9zM499 299h4v1h-4zM483 300h3v1h-3zM536 300h2v1h-2zM524 300h7v1h-7zM491 299h4v2h-4zM499 300h5v1h-5zM454 300h1v1h-1zM466 299h4v3h-4zM487 301h2v1h-2zM491 301h2v1h-2zM528 301h1v1h-1zM503 301h3v1h-3zM499 301h2v1h-2zM507 299h4v3h-4zM516 299h4v3h-4zM524 301h3v1h-3zM483 301h1v1h-1zM495 301h2v1h-2zM524 302h1v1h-1zM487 302h4v1h-4zM503 302h8v1h-8zM466 302h2v1h-2zM516 302h3v1h-3zM474 299h4v4h-4zM503 303h6v1h-6zM495 302h4v2h-4zM474 303h2v1h-2zM516 303h1v1h-1zM487 303h3v1h-3zM487 304h1v1h-1zM495 304h2v1h-2zM503 304h2v1h-2z" fill="#c2c2c2"/>
</g>
<g stroke="#f0f052" stroke-width="1" fill="none" shape-rendering="crispEdges">
<path d="M297.30 167.80L495.30 266.80L693.30 167.80"/>
<path d="M495.30 266.80L495.30 347.50"/>
</g>
<path d="M495 5V205" stroke="#2fae5f" stroke-width="2" fill="none"/>
<g fill="#ecec88"><rect x="494" y="203" width="1.5" height="10"/><rect x="493" y="206" width="3" height="3"/>
<rect x="491" y="205.5" width="2" height="1.5"/><rect x="497" y="205.5" width="2" height="1.5"/>
<rect x="491" y="208.5" width="2" height="1.2" opacity="0.6"/><rect x="497" y="208.5" width="2" height="1.2" opacity="0.6"/></g>
</g>
<!-- view cube -->
<g>
<path d="M615 13.6L660 36.1V90.9L615 113.4L570 90.9V36.1Z" fill="#2e2e2e"/>
<path d="M615 17L657 38.5L615 59.5L573 38.5Z" fill="#5b5b5b"/>
<path d="M573 38.5L615 59.5V110L573 89Z" fill="#4a4a4a"/>
<path d="M615 59.5L657 38.5V89L615 110Z" fill="#6c6c6c"/>
<path d="M573 38.5L615 59.5" stroke="#6e6e6e" stroke-width="1" shape-rendering="crispEdges"/>
<g font-family="Liberation Sans" font-weight="bold" font-size="11.3" fill="#dcdcdc">
<text transform="matrix(0.6,0.3,0,0.96,583.6,73.6)">RIGHT</text>
<text transform="matrix(0.6,-0.3,0,0.96,624.9,83.4)">FRONT</text>
<text transform="matrix(0.6,-0.3,0.72,0.36,609,42)" text-anchor="start">TOP</text>
</g>
</g>
<g fill="#8a8a8a">
<path d="M651.2 21.8L658 15.6L664.8 21.8" fill="none" stroke="#8a8a8a" stroke-width="1.6"/>
<path d="M653 22.6L658 18.2L663 22.6V27H660V23.5H656V27H653Z"/>
<rect x="661.5" y="16" width="1.8" height="3.5"/>
</g>
</svg>
<div class="dlg">
<div class="tb">
<div class="dot" style="left:8px;top:3.8px;background:#fc5f5b;border:1px solid #d8403e;"></div>
<div class="dot" style="left:29px;top:4.8px;width:10px;height:10px;background:#d2d2d2;"></div>
<div class="dot" style="left:49px;top:4.8px;width:10px;height:10px;background:#d2d2d2;"></div>
<div class="tt">Create Torus</div>
</div>
<div class="lbl" style="top:57px">Name</div>
<div class="lbl" style="top:87px">Major Radius</div>
<div class="lbl" style="top:117px">Minor Radius</div>
<div class="lbl" style="top:147px">Color</div>
<div class="fld" style="top:52px"><span>Torus</span></div>
<div class="fld" style="top:82px"><span style="left:4px">16</span></div>
<div class="fld" style="top:112px"><span style="left:4px">8</span></div>
<div style="position:absolute;left:115px;top:142px;width:50px;height:22px;box-sizing:border-box;border:1px solid #2a2a2a;background:linear-gradient(#7a7a7a,#5a5a5a);">
<div style="position:absolute;left:5px;top:4px;width:38px;height:12px;background:#fff;"></div></div>
<div class="btn" style="left:26px">OK</div>
<div class="btn" style="left:121px;background:linear-gradient(#8e8e8e,#767676);">Preview</div>
<div class="btn" style="left:216px">Cancel</div>
</div>
</body></html>
